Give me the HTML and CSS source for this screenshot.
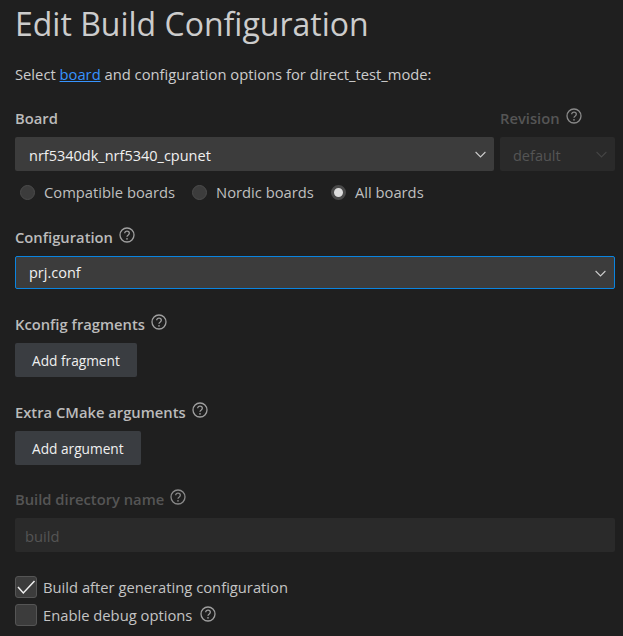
FILE: index.html
```html
<!DOCTYPE html>
<html lang="en">
<head>
<meta charset="utf-8">
<title>Edit Build Configuration</title>
<link rel="stylesheet" href="styles.css">
</head>
<body>
<svg class="defs" width="0" height="0" aria-hidden="true">
  <symbol id="help" viewBox="0 0 16 16">
    <circle cx="8" cy="8" r="7" fill="none" stroke="currentColor" stroke-width="1.3"/>
    <path d="M5.7 6.3c0-1.3 1-2.1 2.3-2.1s2.3.8 2.3 2c0 1-.6 1.5-1.3 2-.6.4-1 .8-1 1.6" fill="none" stroke="currentColor" stroke-width="1.3"/>
    <circle cx="8" cy="11.8" r=".85" fill="currentColor"/>
  </symbol>
  <symbol id="chev" viewBox="0 0 11 7">
    <path d="M.6 1l4.9 4.9L10.4 1" fill="none" stroke="currentColor" stroke-width="1.1"/>
  </symbol>
</svg>
<main class="page">
  <h1 class="title">Edit Build Configuration</h1>
  <p class="intro">Select <a class="link" href="#">board</a> and configuration options for direct_test_mode:</p>

  <div class="board-row">
    <div class="col col-main">
      <div class="label">Board</div>
      <div class="select"><span>nrf5340dk_nrf5340_cpunet</span><svg class="chev"><use href="#chev"/></svg></div>
    </div>
    <div class="col col-rev disabled">
      <div class="label">Revision <svg class="help"><use href="#help"/></svg></div>
      <div class="select"><span>default</span><svg class="chev"><use href="#chev"/></svg></div>
    </div>
  </div>

  <div class="radios">
    <div class="radio-item"><span class="radio"></span>Compatible boards</div>
    <div class="radio-item"><span class="radio"></span>Nordic boards</div>
    <div class="radio-item"><span class="radio checked"></span>All boards</div>
  </div>

  <section class="sec-config">
    <div class="label">Configuration <svg class="help"><use href="#help"/></svg></div>
    <div class="select focused"><span>prj.conf</span><svg class="chev"><use href="#chev"/></svg></div>
  </section>

  <section class="sec-frag">
    <div class="label">Kconfig fragments <svg class="help"><use href="#help"/></svg></div>
    <button class="btn" type="button">Add fragment</button>
  </section>

  <section class="sec-arg">
    <div class="label">Extra CMake arguments <svg class="help"><use href="#help"/></svg></div>
    <button class="btn" type="button">Add argument</button>
  </section>

  <section class="sec-dir disabled">
    <div class="label">Build directory name <svg class="help"><use href="#help"/></svg></div>
    <div class="input">build</div>
  </section>

  <div class="checks">
    <div class="check-item"><span class="check"><svg viewBox="0 0 20 20" class="tick"><path d="M2 10l5.3 6L18.5 4" fill="none" stroke="currentColor" stroke-width="1.5"/></svg></span>Build after generating configuration</div>
    <div class="check-item"><span class="check"></span>Enable debug options <svg class="help"><use href="#help"/></svg></div>
  </div>
</main>
</body>
</html>
```
FILE: styles.css
```css
* { box-sizing: border-box; }
html, body { margin: 0; height: 100%; }
body {
  background: #1f1f1f;
  color: #cccccc;
  font-family: "Open Sans", "Noto Sans", sans-serif;
  font-size: 14.75px;
  overflow: hidden;
}
.defs { position: absolute; }
.page { padding: 0 8px 0 15px; }
.title {
  margin: 0;
  padding-top: 2px;
  height: 47px;
  font-size: 32px;
  line-height: 44px;
  font-weight: 400;
  color: #cccccc;
}
.intro { margin: 17px 0 0; height: 20px; line-height: 20px; }
.link { color: #3794ff; }
.label {
  display: flex;
  align-items: center;
  gap: 6px;
  height: 20px;
  line-height: 20px;
  font-weight: 600;
  color: #bbbbbb;
}
.help { width: 16px; height: 16px; color: #a0a0a0; margin-top: -4px; }
.board-row { display: flex; gap: 6px; margin-top: 24px; }
.col-main { flex: 1; }
.col-rev { width: 115px; }
.label + .select { margin-top: 9px; }
.select {
  display: flex;
  align-items: center;
  justify-content: space-between;
  height: 34px;
  padding: 0 8px 0 14px;
  background: #3c3c3c;
  color: #f0f0f0;
  border-radius: 2px;
  font-size: 14.5px;
}
.select span { margin-top: 3px; }
.chev { width: 11px; height: 7px; color: #cccccc; margin-top: 1px; }
.col-rev .select { background: #2a2a2a; color: #555555; padding-left: 13px; }
.col-rev .chev { color: #444444; }
.disabled .label { color: #555555; }
.disabled .help { color: #8a8a8a; }
.radios { display: flex; gap: 17px; margin-top: 11px; padding-left: 5px; height: 20px; }
.radio-item { display: flex; align-items: center; gap: 9px; color: #bfbfbf; }
.radio {
  width: 15px;
  height: 15px;
  border-radius: 50%;
  background: #3c3c3c;
  border: 1px solid #4c4c4c;
}
.radio.checked {
  background: #dddddd;
  border: 3px solid #4a4a4a;
}
.sec-config { margin-top: 25px; }
.sec-config .label + .select { margin-top: 9px; }
.focused { border: 1px solid #0a84e0; height: 33px; padding-left: 13px; padding-right: 8px; }
.focused span { margin-top: 0; }
.sec-frag { margin-top: 25px; }
.sec-arg { margin-top: 25px; }
.sec-dir { margin-top: 24px; }
.sec-frag .btn, .sec-arg .btn { margin-top: 9px; }
.btn {
  display: block;
  height: 34px;
  padding: 0 17px;
  background: #3a3d41;
  color: #f0f0f0;
  border: 0;
  border-radius: 2px;
  font: inherit;
  font-size: 13.7px;
}
.input {
  margin-top: 9px;
  height: 34px;
  line-height: 36px;
  padding-left: 10px;
  background: #2a2a2a;
  color: #555555;
  border-radius: 2px;
}
.checks { margin-top: 24px; display: flex; flex-direction: column; gap: 6px; }
.check-item { display: flex; align-items: center; gap: 6px; height: 22px; color: #c4c4c4; }
.check-item .help { margin-left: 2px; margin-top: -2px; }
.check {
  width: 22px;
  height: 22px;
  display: block;
  background: #3c3c3c;
  border: 1px solid #555555;
  border-radius: 3px;
}
.tick { display: block; width: 20px; height: 20px; color: #f0f0f0; }
```
